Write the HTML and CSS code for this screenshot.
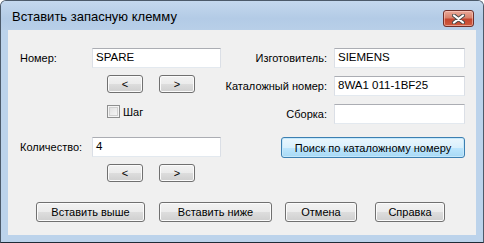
FILE: index.html
```html
<!DOCTYPE html>
<html lang="ru">
<head>
<meta charset="utf-8">
<title>Вставить запасную клемму</title>
<link rel="stylesheet" href="styles.css">
</head>
<body>
<div class="window">
  <div class="titlebar">
    <span class="title">Вставить запасную клемму</span>
    <button class="close" aria-label="Закрыть">
      <svg width="13" height="10" viewBox="0 0 13 10">
        <path d="M2 1.5 L11 8.5 M11 1.5 L2 8.5" stroke="#4a4a4a" stroke-width="4" stroke-linecap="round" fill="none"/>
        <path d="M2 1.5 L11 8.5 M11 1.5 L2 8.5" stroke="#ffffff" stroke-width="2.2" stroke-linecap="round" fill="none"/>
      </svg>
    </button>
  </div>
  <div class="client">
    <div class="upper">
      <div class="col-left">
        <div class="field">
          <label class="lbl-left">Номер:</label>
          <div class="input">SPARE</div>
        </div>
        <div class="nav">
          <button class="btn small">&lt;</button>
          <button class="btn small">&gt;</button>
        </div>
        <div class="check-row">
          <span class="checkbox"></span>
          <span class="check-label">Шаг</span>
        </div>
        <div class="field qty">
          <label class="lbl-left">Количество:</label>
          <div class="input">4</div>
        </div>
        <div class="nav">
          <button class="btn small">&lt;</button>
          <button class="btn small">&gt;</button>
        </div>
      </div>
      <div class="col-right">
        <div class="field">
          <label class="lbl-right">Изготовитель:</label>
          <div class="input wide">SIEMENS</div>
        </div>
        <div class="field next">
          <label class="lbl-right">Каталожный номер:</label>
          <div class="input wide">8WA1 011-1BF25</div>
        </div>
        <div class="field next">
          <label class="lbl-right">Сборка:</label>
          <div class="input wide"></div>
        </div>
        <button class="btn default search">Поиск по каталожному номеру</button>
      </div>
    </div>
    <div class="actions">
      <button class="btn b-above">Вставить выше</button>
      <button class="btn b-below">Вставить ниже</button>
      <button class="btn b-cancel">Отмена</button>
      <button class="btn b-help">Справка</button>
    </div>
  </div>
</div>
</body>
</html>
```
FILE: styles.css
```css
* { box-sizing: border-box; }
html, body { margin: 0; padding: 0; background: #ffffff; }
body {
  width: 484px;
  height: 243px;
  overflow: hidden;
  font-family: "Liberation Sans", Arial, sans-serif;
  font-size: 11px;
  color: #000;
}
.window {
  width: 484px;
  height: 243px;
  border: 1px solid #4c5a6a;
  border-bottom-color: #1f2b36;
  border-radius: 6px 6px 0 0;
  background: #bcd3eb;
  display: flex;
  flex-direction: column;
  overflow: hidden;
}
.titlebar {
  height: 29px;
  flex: none;
  display: flex;
  align-items: center;
  padding-left: 11px;
  background: linear-gradient(#c4d8ee, #b3cbe6 60%, #b8cfe8);
  position: relative;
}
.title {
  font-size: 13px;
  color: #000;
  margin-top: 1px;
}
.close {
  position: absolute;
  right: 9px;
  top: 9px;
  width: 31px;
  height: 17px;
  padding: 0;
  border: 1px solid #6e2f2a;
  border-radius: 3px;
  background: linear-gradient(#eaa99a 0%, #d8826c 45%, #c4452f 55%, #cf5b3e 100%);
  box-shadow: inset 0 0 0 1px rgba(255,210,200,0.55);
  display: flex;
  align-items: center;
  justify-content: center;
}
.close svg { display: block; }
.client {
  margin: 0 7px;
  height: 205px;
  background: #f0f0f0;
  padding: 18px 0 0 12px;
  flex: none;
}
.upper { display: flex; }
.col-left { width: 208px; flex: none; }
.col-right { flex: none; width: 245px; }
.field {
  display: flex;
  align-items: center;
  height: 20px;
}
.lbl-left { width: 72px; flex: none; white-space: nowrap; }
.lbl-right {
  width: 99px;
  flex: none;
  display: flex;
  justify-content: flex-end;
  white-space: nowrap;
  margin-right: 7px;
}
.input {
  width: 129px;
  height: 20px;
  background: #fff;
  border: 1px solid #dbdfe6;
  border-top-color: #abadb3;
  border-bottom-color: #e3e9ef;
  padding: 0 0 0 3px;
  line-height: 17px;
  font-size: 11.5px;
  white-space: nowrap;
}
.input.wide { width: 131px; }
.field.next { margin-top: 8px; }
.nav {
  display: flex;
  gap: 16px;
  padding-left: 87px;
  margin-top: 7px;
}
.btn {
  font-family: inherit;
  font-size: 11px;
  color: #000;
  padding: 0;
  border: 1px solid #707070;
  border-radius: 3px;
  background: linear-gradient(#f2f2f2 0%, #ebebeb 50%, #dddddd 51%, #cfcfcf 100%);
  box-shadow: inset 0 0 0 1px #fbfbfb;
  line-height: 16px;
  white-space: nowrap;
}
.btn.small { width: 36px; height: 18px; line-height: 14px; }
.btn.default {
  border-color: #3c7fb1;
  background: linear-gradient(#eaf6fd 0%, #d9f0fc 50%, #bee6fd 51%, #a7d9f5 100%);
  box-shadow: inset 0 0 0 1px #c5e8fb;
}
.check-row {
  display: flex;
  align-items: center;
  padding-left: 87px;
  margin-top: 12px;
  height: 13px;
}
.checkbox {
  width: 13px;
  height: 13px;
  border: 1px solid #8e8f8f;
  background: linear-gradient(135deg, #dcdcdc, #fafafa);
  box-shadow: inset 0 0 0 1px #f4f4f4, inset 0 0 0 2px #d0d0d0;
  flex: none;
}
.check-label { margin-left: 3px; }
.field.qty { margin-top: 19px; }
.search {
  margin: 13px 0 0 53px;
  width: 184px;
  height: 21px;
  display: block;
}
.actions {
  display: flex;
  margin: 20px 0 0 16px;
}
.actions .btn { height: 20px; }
.b-above { width: 109px; }
.b-below { width: 113px; margin-left: 14px; }
.b-cancel { width: 72px; margin-left: 13px; }
.b-help { width: 70px; margin-left: 18px; }
```
